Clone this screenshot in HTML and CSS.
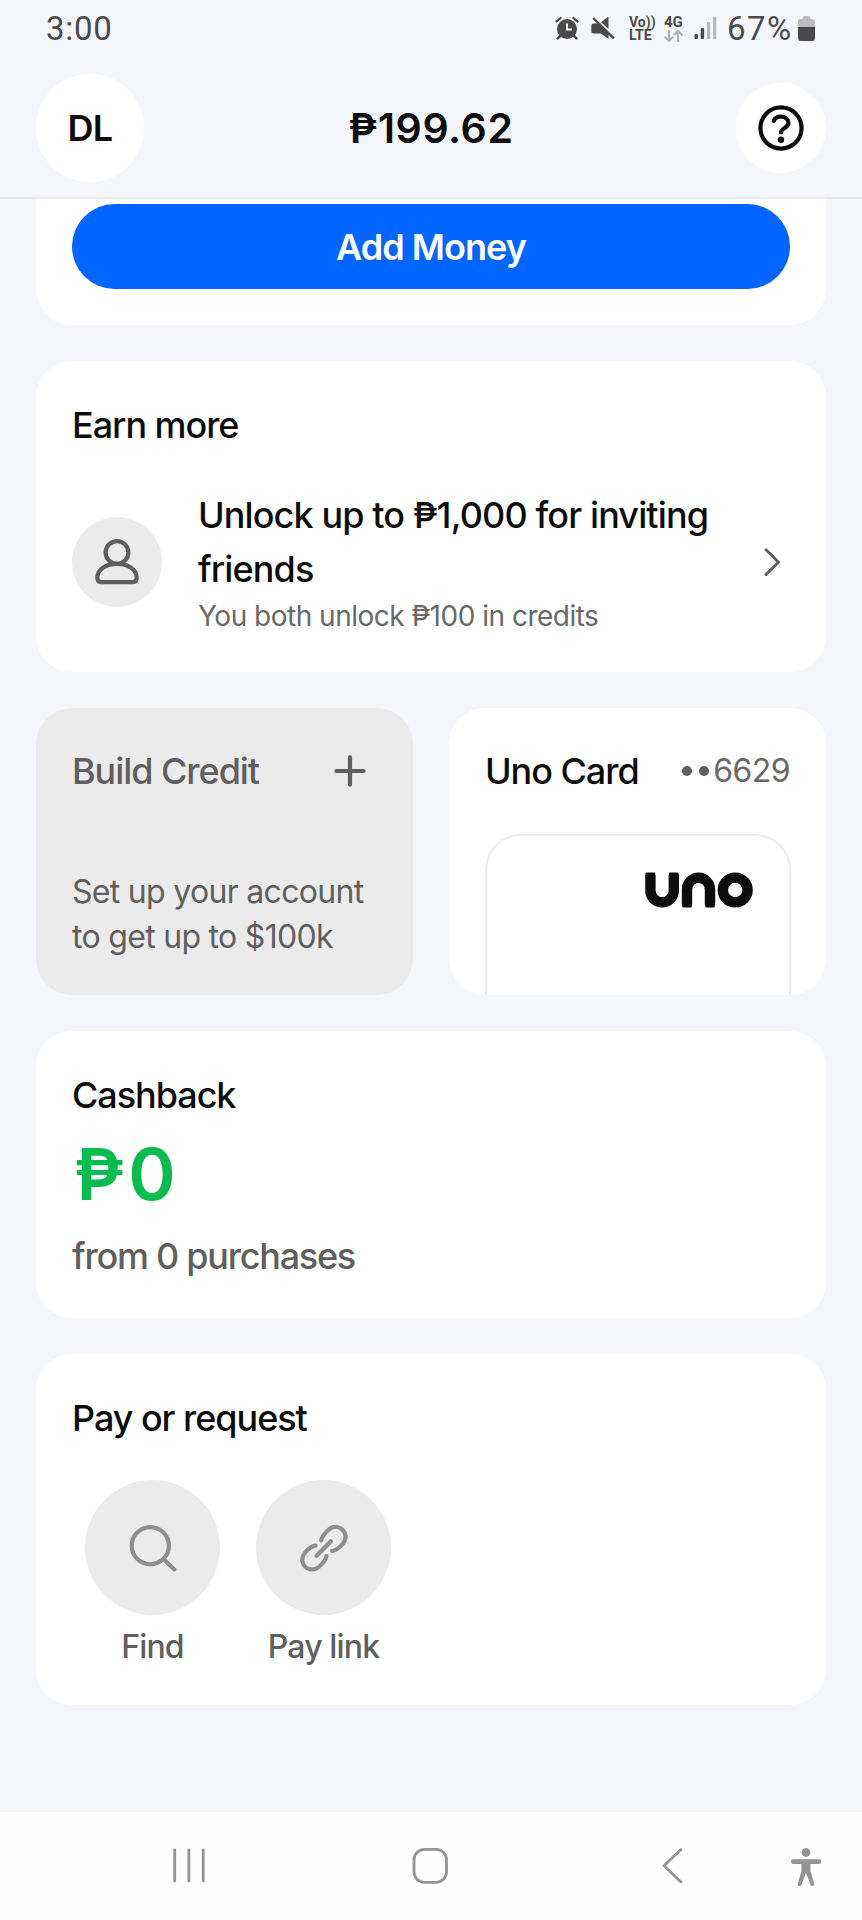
FILE: index.html
```html
<!DOCTYPE html>
<html lang="en">
<head>
<meta charset="utf-8">
<title>Uno</title>
<link rel="stylesheet" href="styles.css">
</head>
<body>
<div class="phone">
  <header class="top">
    <div class="status">
      <span class="clock">3:00</span>
      <div class="status-icons">
        <svg class="ic-alarm" width="24" height="24" viewBox="0 0 24 24" fill="none" stroke="#4a4a4b">
          <circle cx="12" cy="13" r="10" fill="#4a4a4b" stroke="none"/>
          <path d="M1.4 5.6 5.6 2M22.6 5.6 18.4 2" stroke-width="2.2" stroke-linecap="round"/>
          <path d="M5 20l-2.4 2.4M19 20l2.4 2.4" stroke-width="2.6" stroke-linecap="round"/>
          <path d="M12 7.5v6h5" stroke="#f5f6fa" stroke-width="2"/>
        </svg>
        <svg class="ic-mute" width="24" height="24" viewBox="0 0 24 24" fill="#4a4a4b">
          <path d="M9.500 6.500 17.500 0.500v12.500zM2.500 7.500h4.500L17.500 18v5L10 17.500H2.500Q.3 17.500 .3 15.300v-5.600Q.3 7.500 2.500 7.500z"/>
          <path d="M3.500 1 24 21" stroke="#f5f6fa" stroke-width="2"/>
          <path d="M2.200 2 22.800 22.400" stroke="#4a4a4b" stroke-width="2.400"/>
        </svg>
        <div class="volte"><span>Vo))</span><span>LTE</span></div>
        <div class="net">
          <span>4G</span>
          <svg width="19" height="12" viewBox="0 0 19 12" fill="none" stroke="#b0b1b4" stroke-width="2"><path d="M5 0v11M.8 6.800 5 11l4.200-4.200M14 12V1M9.800 5.200 14 1l4.200 4.200"/></svg>
        </div>
        <svg class="ic-signal" width="23" height="24" viewBox="0 0 23 24">
          <rect x="0.500" y="18" width="3.400" height="5" rx="1" fill="#4a4a4b"/><rect x="6.700" y="12" width="3.400" height="11" rx="1" fill="#4a4a4b"/>
          <rect x="13" y="6" width="3.200" height="17" rx="1" fill="#b8b9bc"/><rect x="19" y="0.500" width="3.200" height="22.500" rx="1" fill="#b8b9bc"/>
        </svg>
        <span class="pct">67%</span>
        <svg class="ic-batt" width="17" height="25" viewBox="0 0 17 25"><path d="M0 11V6Q0 3 3 3h1.500V2Q4.500 0 6.500 0h4q2 0 2 2v1H14q3 0 3 3v5z" fill="#bbbcbf"/><path d="M0 11h17v11q0 3-3 3H3q-3 0-3-3z" fill="#4a4a4b"/></svg>
      </div>
    </div>
    <div class="bar">
      <div class="avatar">DL</div>
      <div class="balance">₱199.62</div>
      <div class="help">
        <svg width="46" height="46" viewBox="0 0 46 46" fill="none" stroke="#0d0d0e">
          <circle cx="23" cy="23" r="20.600" stroke-width="4.200"/>
          <path d="M15.800 15.800c1.200-3 4-4.300 7.400-4.200 4 .2 7.200 2.500 7.200 6.200 0 5.600-7.400 5.200-7.400 9.600" stroke-width="4.200" stroke-linecap="round"/>
          <circle cx="23" cy="34.700" r="3.200" fill="#0d0d0e" stroke="none"/>
        </svg>
      </div>
    </div>
  </header>

  <main class="content">
    <section class="card add"><div class="button">Add Money</div></section>

    <section class="card">
      <h2>Earn more</h2>
      <div class="invite">
        <div class="person">
          <svg width="46" height="46" viewBox="0 0 46 46" fill="none" stroke="#5f5f60" stroke-width="4.200" stroke-linejoin="round">
            <circle cx="23" cy="13.500" r="11.400"/>
            <path d="M23 24.900C12 24.900 3.300 30.500 3.300 38.500 3.300 41.800 4.800 43.200 7.300 43.200H38.700C41.200 43.200 42.700 41.800 42.700 38.500 42.700 30.500 34 24.900 23 24.900z"/>
          </svg>
        </div>
        <div class="invite-text">
          <p class="lead">Unlock up to ₱1,000 for inviting friends</p>
          <p class="sub">You both unlock ₱100 in credits</p>
        </div>
        <svg class="chev" width="18" height="28" viewBox="0 0 18 28" fill="none" stroke="#5f5f60" stroke-width="2.900" stroke-linecap="round" stroke-linejoin="round"><path d="M3 1.800 15.500 14.200 3 26.600"/></svg>
      </div>
    </section>

    <div class="pair">
      <section class="card build">
        <div class="row">
          <h2>Build Credit</h2>
          <svg class="plus" width="32" height="32" viewBox="0 0 32 32" stroke="#5f5f60" stroke-width="4.200" stroke-linecap="round"><path d="M16 2.400v27.200M2.400 16h27.200"/></svg>
        </div>
        <p class="build-text">Set up your account to get up to $100k</p>
      </section>
      <section class="card uno">
        <div class="row">
          <h2>Uno Card</h2>
          <div class="last4"><i></i><i></i><span>6629</span></div>
        </div>
        <div class="plastic">
          <svg width="108" height="36" viewBox="0 0 108 36" fill="none" stroke="#0d0d0e" stroke-width="10.400" stroke-linejoin="round">
            <path d="M5.400 3v15.300a11.700 12 0 0 0 23.400 0V3"/>
            <path d="M42 33V17.700a11.500 12 0 0 1 23 0V33"/>
            <path d="M1.700 1.900h7.400M25.100 1.900h7.400M38.300 34.100h7.400M61.300 34.100h7.400" stroke-width="2.600" stroke-linecap="round"/>
            <circle cx="90.200" cy="18" r="12.400"/>
          </svg>
        </div>
      </section>
    </div>

    <section class="card">
      <h2>Cashback</h2>
      <p class="cash">₱0</p>
      <p class="from">from 0 purchases</p>
    </section>

    <section class="card">
      <h2>Pay or request</h2>
      <div class="actions">
        <div class="action">
          <div class="disc"><svg width="48" height="48" viewBox="0 0 48 48" fill="none" stroke="#8f8f90" stroke-width="4.200" stroke-linecap="round"><circle cx="21.300" cy="21.700" r="18.600"/><path d="M35.500 36 45.300 45.400"/></svg></div>
          <span class="find">Find</span>
        </div>
        <div class="action">
          <div class="disc"><svg width="48" height="48" viewBox="0 0 48 48" fill="none" stroke="#8f8f90" stroke-width="4.200" stroke-linecap="round"><path d="M21.200 16.400C21.700 13.300 23.500 11 26.800 7.400 30.300 3.600 33.400 2.300 37.300 3c4 .7 7.500 4.300 8.200 8.300.6 3.900-.8 6.800-4.800 10.600-3.300 3.200-5.200 4.700-8.600 5M15.600 21.600c-3.300.4-5.700 1.800-8.700 5C3.200 30.400 1.700 33.500 2.400 37.400c.7 4 4 7.400 8.100 8 3.900.6 7-.8 10.600-4.500 3.300-3.300 4.900-5.500 5.300-8.900M16.600 31.700 30.800 17.200"/></svg></div>
          <span class="link">Pay link</span>
        </div>
      </div>
    </section>
  </main>

  <nav class="nav">
    <svg width="862" height="108" viewBox="0 0 862 108" fill="none" stroke="#949494" stroke-width="2.800" stroke-linecap="round" stroke-linejoin="round">
      <path d="M174.700 38v31M188.900 38v31M203.200 38v31"/>
      <rect x="414" y="37.300" width="32.500" height="33" rx="10.500"/>
      <path d="M681 37.500 664 53.800 681 70"/>
      <g fill="#949494" stroke="none">
        <circle cx="806" cy="40.500" r="4.400"/>
        <path d="M793 47.300h26a2 2 0 0 1 2 2v.7a2 2 0 0 1-2 2h-8.500v7l3.700 12.500q.7 2-1.200 2.400-2 .4-2.600-1.500L806 61l-4.400 11.400q-.7 1.900-2.600 1.500-1.900-.4-1.200-2.400L801.500 59v-7H793a2 2 0 0 1-2-2v-.7a2 2 0 0 1 2-2z"/>
      </g>
    </svg>
  </nav>
</div>
</body>
</html>
```
FILE: styles.css
```css
* { box-sizing: border-box; margin: 0; padding: 0; }
body { background: #f5f6fa; color: #0d0d0e; font-family: Inter, sans-serif; }
svg { display: block; flex: none; }
.phone { width: 862px; height: 1920px; display: flex; flex-direction: column; overflow: hidden; }

.top { height: 199px; border-bottom: 2px solid #e9eaed; flex: none; }
.status { height: 56px; padding: 0 46px 0 46px; display: flex; justify-content: space-between; color: #4a4a4b; font-family: Roboto, sans-serif; }
.clock { font-size: 33px; line-height: 57px; letter-spacing: 0.7px; }
.status-icons { display: flex; align-items: flex-start; padding-top: 16px; }
.ic-mute { margin-left: 12px; }
.volte { width: 25px; margin-left: 14px; display: flex; flex-direction: column; font: 700 14px/13px Roboto, sans-serif; white-space: nowrap; }
.net { width: 21px; margin-left: 10px; display: flex; flex-direction: column; font: 700 15px/13px Roboto, sans-serif; }
.net svg { margin-top: 1px; }
.ic-signal { margin-left: 9px; }
.pct { margin: -16px 0 0 10px; font-size: 33px; line-height: 57px; width: 68px; letter-spacing: 1.4px; }
.ic-batt { margin: 0 1px 0 3px; }

.bar { height: 143px; padding: 0 36px; display: grid; grid-template-columns: 108px 1fr 108px; align-items: center; }
.avatar { width: 108px; height: 108px; border-radius: 50%; background: #fff; display: flex; align-items: center; justify-content: center; font-size: 36px; font-weight: 600; letter-spacing: -0.7px; }
.balance { text-align: center; font-size: 41px; font-weight: 600; letter-spacing: 0.6px; }
.help { width: 90px; height: 90px; border-radius: 50%; background: #fff; justify-self: end; display: flex; align-items: center; justify-content: center; }

.content { flex: 1; padding: 0 36px; display: flex; flex-direction: column; gap: 36px; }
.card { background: #fff; border-radius: 36px; padding: 37px 36px 35px; }
h2 { font-size: 36px; line-height: 54px; font-weight: 500; letter-spacing: -1.05px; white-space: nowrap; }
.add { height: 126px; padding: 5px 36px 36px; border-radius: 0 0 36px 36px; }
.button { height: 85px; border-radius: 43px; background: #0066ff; color: #fff; text-align: center; font-size: 36px; line-height: 86px; font-weight: 600; letter-spacing: -0.95px; }

.invite { margin-top: 36px; display: flex; align-items: center; }
.person { width: 90px; height: 90px; margin-bottom: 2px; border-radius: 50%; background: #ebebeb; display: flex; align-items: center; justify-content: center; }
.invite-text { width: 530px; margin-left: 36px; }
.lead { font-size: 36px; line-height: 54px; font-weight: 500; letter-spacing: -0.88px; }
.sub { font-size: 28px; line-height: 41px; color: #69696a; letter-spacing: -0.5px; }
.chev { margin: 0 0 2px 35px; }

.pair { display: grid; grid-template-columns: 1fr 1fr; gap: 36px; height: 287px; }
.row { display: flex; align-items: center; justify-content: space-between; }
.build { padding: 36px; background: #ebebeb; color: #5f5f60; display: flex; flex-direction: column; justify-content: space-between; }
.plus { margin-right: 11px; }
.build-text { font-size: 32px; line-height: 45px; letter-spacing: -0.7px; }
.uno { display: flex; flex-direction: column; overflow: hidden; padding: 36px 36px 0; }
.last4 { display: flex; align-items: center; color: #69696a; font-size: 32px; line-height: 50px; letter-spacing: -0.6px; }
.last4 i { width: 10px; height: 10px; border-radius: 50%; background: #5f5f60; margin-right: 7.500px; }
.last4 i + i { margin-right: 4px; }
.plastic { flex: 1; margin: 36px -1px 0 0; border: 2px solid #ebebeb; border-bottom: 0; border-radius: 36px 36px 0 0; padding: 36px; display: flex; justify-content: flex-end; }

.cash { padding-left: 2px; margin: -2px 0 2px; font-size: 72px; line-height: 107px; font-weight: 600; letter-spacing: 4px; color: #0abb4f; }
.from { font-size: 36px; line-height: 54px; font-weight: 500; letter-spacing: -1.25px; color: #5f5f60; }

.actions { margin: 35px 0 0 13px; display: flex; gap: 36px; }
.action { width: 135px; display: flex; flex-direction: column; align-items: center; gap: 9px; padding-bottom: 1px; font-size: 32px; line-height: 45px; font-weight: 500; letter-spacing: -0.85px; color: #5f5f60; }
.disc { width: 135px; height: 135px; border-radius: 50%; background: #ebebeb; display: flex; align-items: center; justify-content: center; }

.nav { height: 108px; background: #fefefe; flex: none; }
```
